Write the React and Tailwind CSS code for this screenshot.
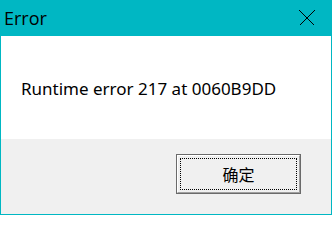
export default function App() {
  return (
    <div className="w-[332px] h-[215px] flex flex-col border-l border-r border-b border-[#00b7c3] bg-white overflow-hidden">
      <div className="h-[36px] -mx-px bg-[#00b7c3] flex items-center justify-between shrink-0">
        <span
          className="pl-[4px] text-[18px] leading-none text-black"
          style={{ fontFamily: '"Open Sans", "Noto Sans", sans-serif' }}
        >
          Error
        </span>
        <div className="w-[46px] h-full flex items-center justify-center mr-[2px]">
          <svg width="16" height="16" viewBox="0 0 16 16" shapeRendering="crispEdges">
            <path d="M0.5 0.5 L15.5 15.5 M15.5 0.5 L0.5 15.5" stroke="#000" strokeWidth="1" fill="none" />
          </svg>
        </div>
      </div>
      <div className="h-[103px] bg-white flex items-center shrink-0 pl-[20px] pt-[2px]">
        <span
          className="text-[17px] leading-none text-black"
          style={{ fontFamily: '"Noto Sans", "Noto Sans CJK SC", sans-serif' }}
        >
          Runtime error 217 at 0060B9DD
        </span>
      </div>
      <div className="flex-1 bg-[#f0f0f0] flex justify-end items-start pt-[15px] pr-[30px]">
        <div className="w-[125px] h-[40px] border border-[#6a6a6a]">
          <div className="w-full h-full border border-t-white border-l-white border-r-[#a0a0a0] border-b-[#a0a0a0] p-[2px] bg-[#f0f0f0]">
            <div className="w-full h-full border border-dotted border-black flex items-center justify-center">
              <span
                className="text-[16px] leading-none text-black"
                style={{ fontFamily: '"Noto Sans CJK SC", sans-serif' }}
              >
                确定
              </span>
            </div>
          </div>
        </div>
      </div>
    </div>
  );
}
